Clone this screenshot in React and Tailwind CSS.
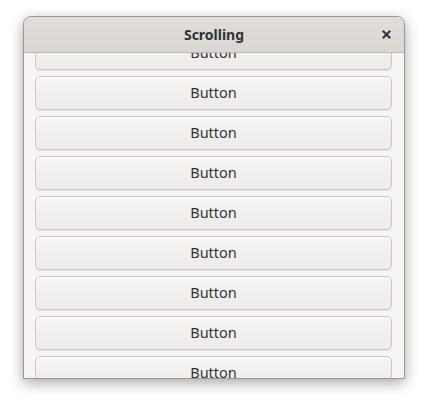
import React from "react";

function Btn() {
  return (
    <div className="flex h-[34px] shrink-0 items-center justify-center rounded-[5px] border border-[#cdc7c2] bg-gradient-to-b from-[#f6f5f4] to-[#edebe9] text-[14.5px] text-[#2e3436] shadow-[inset_0_1px_rgba(255,255,255,0.8),0_1px_rgba(0,0,0,0.07)]">
      Button
    </div>
  );
}

export default function App() {
  return (
    <div className="flex h-[402px] w-[438px] bg-white pl-[23px] pt-[16px]" style={{ fontFamily: '"Noto Sans", "DejaVu Sans", sans-serif' }}>
      <div className="flex h-[363px] w-[382px] flex-col overflow-hidden rounded-t-[8px] border border-[#9a9896] bg-[#f6f5f4] shadow-[0_4px_14px_rgba(0,0,0,0.35)]">
        <div className="relative z-10 flex h-[36px] shrink-0 items-center justify-center border-b border-[#bfb8b1] bg-gradient-to-b from-[#e1dedb] to-[#dad6d2]">
          <span className="text-[14px] font-bold text-[#2e3436]">Scrolling</span>
          <svg width="9" height="9" viewBox="0 0 9 9" className="absolute right-[13px] top-[13px]">
            <path d="M0.8 0.8 L8.2 8.2 M8.2 0.8 L0.8 8.2" stroke="#2e3436" strokeWidth="2.1" />
          </svg>
        </div>
        <div className="flex flex-1 flex-col overflow-hidden pl-[11px] pr-[12px]">
          <div className="-mt-[17px] flex flex-col gap-[6px]">
            {Array.from({ length: 9 }).map((_, i) => (
              <Btn key={i} />
            ))}
          </div>
        </div>
      </div>
    </div>
  );
}
